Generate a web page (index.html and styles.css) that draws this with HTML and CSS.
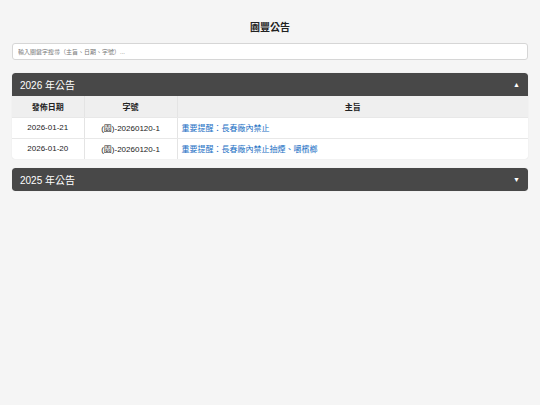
FILE: index.html
```html
<!DOCTYPE html>
<html lang="zh-Hant">
<head>
<meta charset="utf-8">
<link rel="stylesheet" href="styles.css">
</head>
<body>
<div class="page">
  <h1 class="title">園豐公告</h1>
  <input class="search" type="text" placeholder="輸入關鍵字搜尋（主旨、日期、字號）...">
  <section class="year open">
    <div class="year-head"><span>2026 年公告</span><span class="arrow">▲</span></div>
    <table class="notices">
      <colgroup><col class="c-date"><col class="c-no"><col class="c-subj"></colgroup>
      <thead><tr><th>發佈日期</th><th>字號</th><th>主旨</th></tr></thead>
      <tbody>
        <tr><td>2026-01-21</td><td>(園)-20260120-1</td><td class="subj"><a href="#">重要提醒：長春廠內禁止</a></td></tr>
        <tr><td>2026-01-20</td><td>(園)-20260120-1</td><td class="subj"><a href="#">重要提醒：長春廠內禁止抽煙、嚼檳榔</a></td></tr>
      </tbody>
    </table>
  </section>
  <section class="year">
    <div class="year-head"><span>2025 年公告</span><span class="arrow">▼</span></div>
  </section>
</div>
</body>
</html>
```
FILE: styles.css
```css
html, body { margin: 0; padding: 0; background: #f5f5f5; }
body { font-family: "Liberation Sans", Arial, "Noto Sans CJK TC", sans-serif; color: #222; }
.page { padding: 22px 12px 0; }
.title { margin: 0 0 9px; text-align: center; font-size: 10px; font-weight: bold; line-height: 12px; color: #222; }
.search { display: block; box-sizing: border-box; width: 100%; height: 17px; margin: 0 0 13px; padding: 0 5px; border: 1px solid #d6d6d6; border-radius: 3px; background: #fff; font-family: inherit; font-size: 6px; color: #333; outline: none; }
.search::placeholder { color: #777; }
.year { margin-bottom: 9px; border-radius: 3px; background: #fff; box-shadow: 0 0 1px rgba(0,0,0,0.15); overflow: hidden; }
.year-head { display: flex; justify-content: space-between; align-items: center; height: 23px; padding: 0 8px; background: #484848; color: #fff; font-size: 10px; border-radius: 3px 3px 0 0; }
.year:not(.open) .year-head { border-radius: 3px; }
.arrow { font-size: 7px; }
.notices { width: 100%; border-collapse: collapse; font-size: 8px; }
.c-date { width: 72px; }
.c-no { width: 93px; }
.notices th, .notices td { height: 21px; padding: 0 4px; text-align: center; border-right: 1px solid #e4e4e4; border-bottom: 1px solid #e8e8e8; box-sizing: border-box; }
.notices th:last-child, .notices td:last-child { border-right: none; }
.notices tr:last-child td { border-bottom: none; }
.notices th { background: #efefef; font-weight: bold; color: #222; }
.notices td { color: #222; }
.notices td.subj { text-align: left; }
.notices a { color: #1a6fc4; text-decoration: none; }
```
